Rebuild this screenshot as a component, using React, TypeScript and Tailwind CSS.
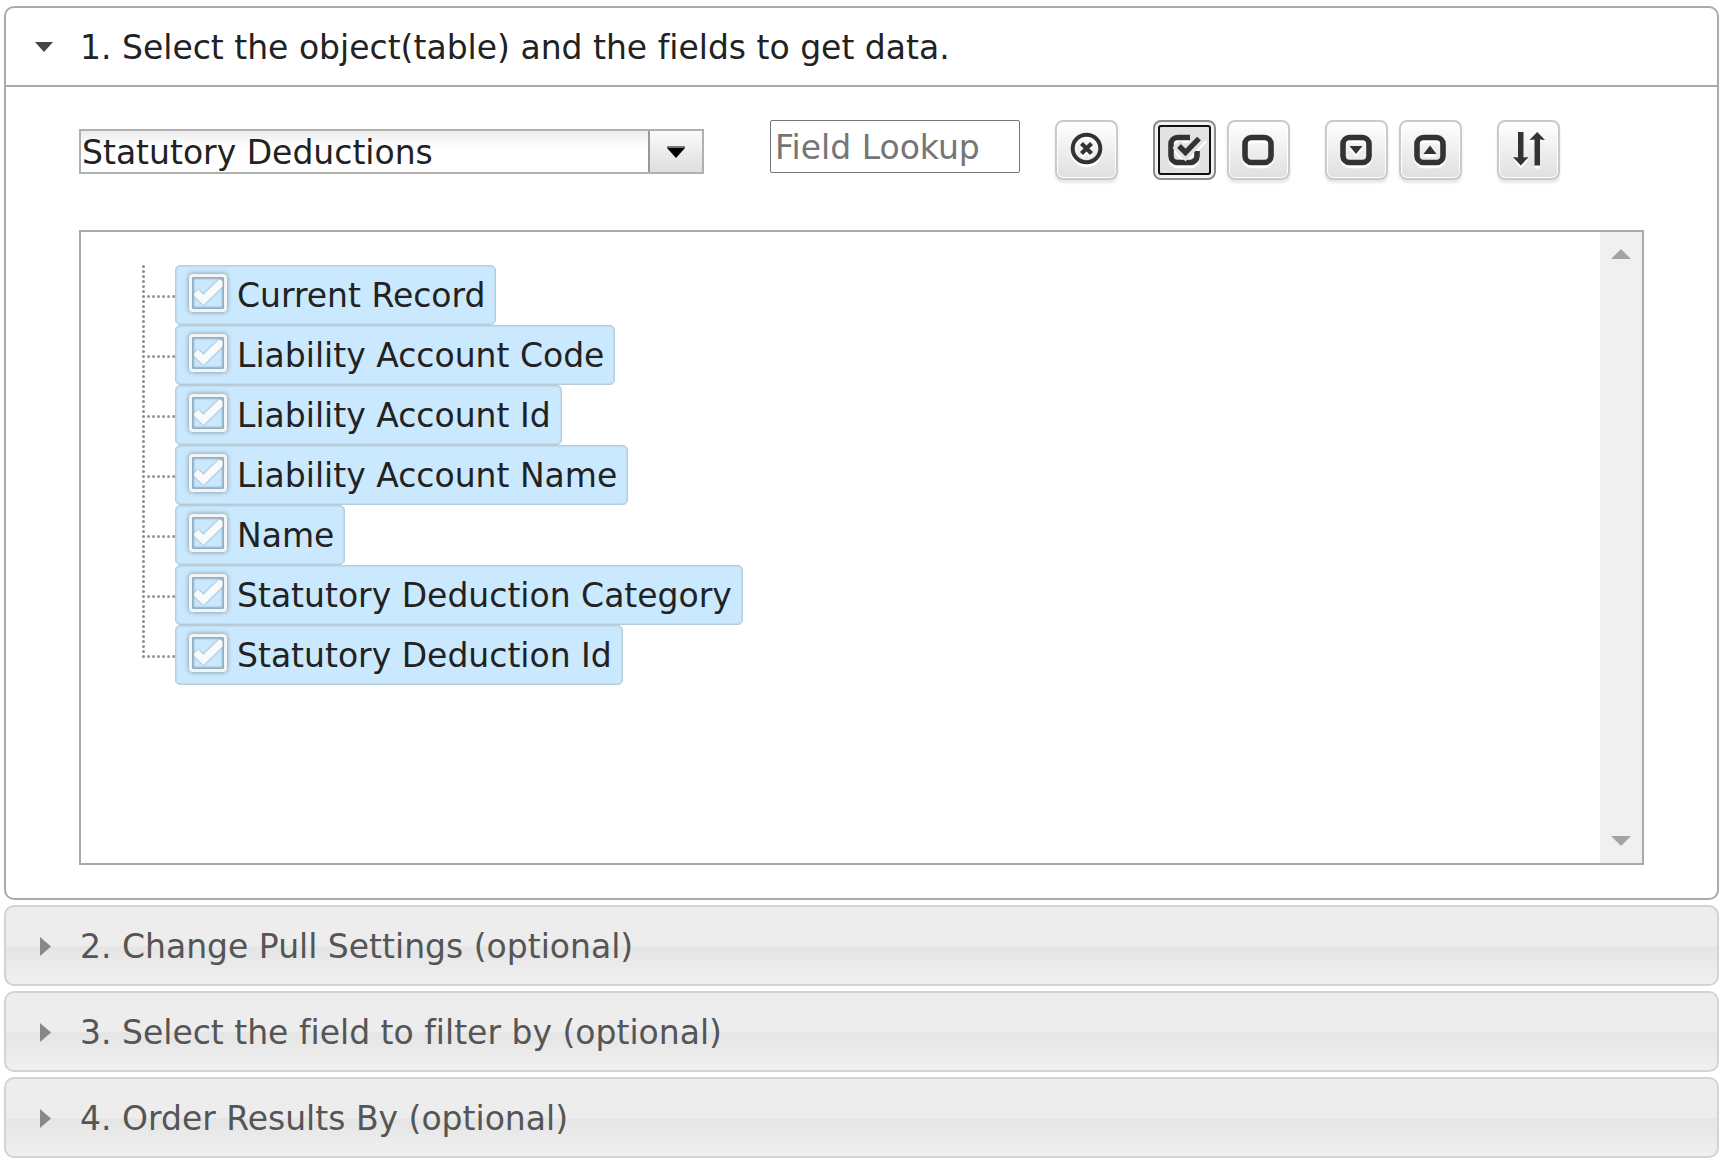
import { useState, type ReactNode } from "react"

const FIELDS = [
  "Current Record",
  "Liability Account Code",
  "Liability Account Id",
  "Liability Account Name",
  "Name",
  "Statutory Deduction Category",
  "Statutory Deduction Id",
]

const CLOSED_SECTIONS = [
  "2. Change Pull Settings (optional)",
  "3. Select the field to filter by (optional)",
  "4. Order Results By (optional)",
]

interface ToolButtonProps {
  label: string
  active?: boolean
  onClick?: () => void
  children: ReactNode
}

function ToolButton({ label, active, onClick, children }: ToolButtonProps) {
  const look = active
    ? "border-[#8c8c8c] bg-[#e2e2e2] outline-2 -outline-offset-7 outline-[#101010] shadow-[inset_0_0_0_3px_#f2f2f2]"
    : "border-[#cacaca] bg-linear-to-b from-white to-[#dfdfdf] shadow-[inset_0_0_0_1px_#fff,0_3px_3px_rgba(0,0,0,0.1)]"

  return (
    <button
      type="button"
      aria-label={label}
      onClick={onClick}
      className={`flex h-[60px] w-[63px] shrink-0 items-center justify-center rounded-lg border-2 ${look}`}
    >
      <svg
        viewBox="0 0 36 36"
        className="h-9 w-9 overflow-visible fill-none stroke-[#333] drop-shadow-[0_3px_0_#fff]"
        aria-hidden="true"
      >
        {children}
      </svg>
    </button>
  )
}

/* Dotted line that joins a field to the trunk of the tree */
function Branch({ last }: { last: boolean }) {
  return (
    <svg viewBox="0 0 34 60" className="h-[60px] w-[34px] shrink-0" aria-hidden="true">
      <path
        d={last ? "M2.5 1.5V32" : "M2.5 1.5V60"}
        fill="none"
        stroke="#8c8c8c"
        strokeWidth="3"
        strokeLinecap="round"
        strokeDasharray="0.1 4.9"
      />
      <path
        d="M7.5 31.5H34"
        fill="none"
        stroke="#999"
        strokeWidth="3"
        strokeLinecap="round"
        strokeDasharray="0.1 4.9"
      />
    </svg>
  )
}

interface FieldRowProps {
  name: string
  checked: boolean
  last: boolean
  onToggle: () => void
}

function FieldRow({ name, checked, last, onToggle }: FieldRowProps) {
  return (
    <li className="flex">
      <Branch last={last} />
      <label className="flex h-[60px] items-center gap-2 rounded-[5px] border border-[#b8ccd9] bg-[#cbe9fe] pr-2.5 pl-[11px] whitespace-nowrap shadow-[inset_0_0_2px_#a9bfcd]">
        <span className="grid h-12 w-[42px] place-items-center pb-1">
          <input
            type="checkbox"
            checked={checked}
            onChange={onToggle}
            className="col-start-1 row-start-1 h-[38px] w-[38px] appearance-none rounded-[4px] border-3 border-[#f2f4f6] bg-[#cbe9fe] shadow-[0_0_4px_1px_#8fa9b9,inset_0_0_2px_2px_#90adc0]"
          />
          {checked && (
            <svg
              viewBox="0 0 38 38"
              className="pointer-events-none col-start-1 row-start-1 h-[38px] w-[38px] drop-shadow-[0_0_1px_#7f9bad]"
              aria-hidden="true"
            >
              <path d="M5 19.5L9 15.5L14.5 20.5L30 5.5L33.5 7V12.5L14.5 31L5 22Z" fill="#f8f9fa" />
            </svg>
          )}
        </span>
        <span className="pt-0.5">{name}</span>
      </label>
    </li>
  )
}

export default function App() {
  const [active, setActive] = useState("all")
  const [checked, setChecked] = useState<string[]>(FIELDS)

  const toggle = (name: string) =>
    setChecked((prev) => (prev.includes(name) ? prev.filter((n) => n !== name) : [...prev, name]))

  return (
    <main className="flex flex-col gap-[5px] bg-white px-1 pt-1.5 pb-[5px] font-['Verdana','DejaVu_Sans',sans-serif] text-[33px] leading-[40px] text-[#222] [font-variant-ligatures:none]">
      {/* Open section */}
      <section className="rounded-[10px] border-2 border-[#aaa]">
        <h2>
          <button
            type="button"
            aria-expanded="true"
            className="flex h-[77px] w-full items-center gap-[25px] pl-[29px] text-left"
          >
            <svg viewBox="0 0 20 20" className="h-5 w-5" aria-hidden="true">
              <path d="M0 5H18L9 15Z" fill="#454545" />
            </svg>
            <span className="pt-0.5">1. Select the object(table) and the fields to get data.</span>
          </button>
        </h2>

        <div className="border-t-2 border-[#aaa] px-[73px] py-[33px]">
          {/* Toolbar */}
          <div className="flex items-start">
            <div className="mb-1.5 flex h-[45px] w-[625px] shrink-0 self-end border-2 border-[#b0b0b0]">
              <select
                aria-label="Object"
                className="min-w-0 flex-1 appearance-none bg-linear-to-b from-[#ececec] to-white to-40% pt-0.5 pl-px leading-[40px]"
              >
                <option>Statutory Deductions</option>
              </select>
              <span className="flex w-[54px] items-center justify-center border-l-2 border-[#999] bg-linear-to-b from-[#fafafa] to-[#dedede]">
                <svg viewBox="0 0 18 12" className="h-3 w-[18px]" aria-hidden="true">
                  <path d="M0 0H18V2H0Z" fill="#777" />
                  <path d="M0 2H18L9 12Z" fill="#000" />
                </svg>
              </span>
            </div>

            <input
              type="text"
              aria-label="Field Lookup"
              placeholder="Field Lookup"
              className="ml-[66px] h-[53px] w-[250px] min-w-0 rounded-[2px] border border-[#767676] px-1 pt-0.5 placeholder:text-[#757575]"
            />

            <div className="ml-[35px] flex gap-[35px]">
              <ToolButton label="Clear lookup">
                <circle cx="17.5" cy="16.5" r="13.8" strokeWidth="4" />
                <path d="M12.5 11.5L22.5 21.5M22.5 11.5L12.5 21.5" strokeWidth="4.2" />
              </ToolButton>

              <div className="flex gap-[11px]">
                <ToolButton
                  label="Select all"
                  active={active === "all"}
                  onClick={() => {
                    setActive("all")
                    setChecked(FIELDS)
                  }}
                >
                  <path
                    d="M23 5.5H10.5A6.5 6.5 0 0 0 4 12V24A6.5 6.5 0 0 0 10.5 30.5H23.5A6.5 6.5 0 0 0 30 24V19"
                    strokeWidth="5.6"
                  />
                  <path d="M9.5 12L18.5 21.5L36 3" stroke="#e2e2e2" strokeWidth="11" />
                  <path d="M12 14L18.5 20.5L32 6.5" strokeWidth="5.4" />
                </ToolButton>
                <ToolButton
                  label="Select none"
                  active={active === "none"}
                  onClick={() => {
                    setActive("none")
                    setChecked([])
                  }}
                >
                  <rect x="4" y="5.5" width="26" height="25" rx="6.5" strokeWidth="5.6" />
                </ToolButton>
              </div>

              <div className="flex gap-[11px]">
                <ToolButton label="Expand all">
                  <rect x="4" y="5.5" width="26" height="25" rx="6.5" strokeWidth="5.6" />
                  <path d="M10.5 14H23.5L17 22Z" fill="#333" stroke="none" />
                </ToolButton>
                <ToolButton label="Collapse all">
                  <rect x="4" y="5.5" width="26" height="25" rx="6.5" strokeWidth="5.6" />
                  <path d="M10.5 22H23.5L17 13.5Z" fill="#333" stroke="none" />
                </ToolButton>
              </div>

              <ToolButton label="Sort fields">
                <path d="M7 0H12.5V25.5L17.5 25L9.8 33.5L2 25L7 25.5Z" fill="#333" stroke="none" />
                <path d="M23.5 33.5H29V7.5L34 8L26.2 0L18.5 8L23.5 7.5Z" fill="#333" stroke="none" />
              </ToolButton>
            </div>
          </div>

          {/* Field list */}
          <div className="mt-[50px] flex h-[635px] border-2 border-[#aaa]">
            <ul className="min-w-0 flex-1 overflow-hidden pt-[33px] pl-[60px]">
              {FIELDS.map((name, i) => (
                <FieldRow
                  key={name}
                  name={name}
                  checked={checked.includes(name)}
                  last={i === FIELDS.length - 1}
                  onToggle={() => toggle(name)}
                />
              ))}
            </ul>
            <div className="flex w-[42px] shrink-0 flex-col items-center justify-between bg-[#f0f0f0] py-[17px]">
              <button type="button" aria-label="Scroll up">
                <svg viewBox="0 0 20 10" className="block h-2.5 w-5" aria-hidden="true">
                  <path d="M0 10L10 0L20 10Z" fill="#a3a3a3" />
                </svg>
              </button>
              <button type="button" aria-label="Scroll down">
                <svg viewBox="0 0 20 10" className="block h-2.5 w-5" aria-hidden="true">
                  <path d="M0 0H20L10 10Z" fill="#a3a3a3" />
                </svg>
              </button>
            </div>
          </div>
        </div>
      </section>

      {/* Closed sections */}
      {CLOSED_SECTIONS.map((title) => (
        <h2 key={title}>
          <button
            type="button"
            aria-expanded="false"
            className="flex h-[81px] w-full items-center gap-[25px] rounded-[10px] border-2 border-[#d3d3d3] bg-linear-to-b from-[#ededed] from-50% via-[#e5e5e5] via-52% to-[#f0f0f0] pl-[29px] text-left text-[#555]"
          >
            <svg viewBox="0 0 20 20" className="h-5 w-5" aria-hidden="true">
              <path d="M5 1V20L16 10.5Z" fill="#888" />
            </svg>
            <span className="pt-0.5">{title}</span>
          </button>
        </h2>
      ))}
    </main>
  )
}
